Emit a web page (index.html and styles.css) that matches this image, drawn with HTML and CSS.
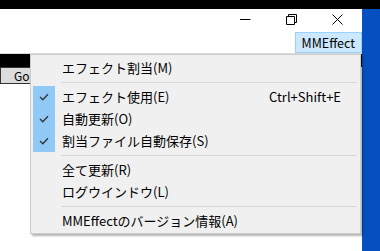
FILE: index.html
```html
<!DOCTYPE html>
<html lang="ja">
<head>
    <meta charset="UTF-8">
    <meta name="viewport" content="width=device-width, initial-scale=1.0">
    <title>MMEffect</title>
    <link rel="stylesheet" href="styles.css">
</head>
<body>
    <div class="topbar"></div>

    <div class="screen">
        <div class="window">
            <div class="titlebar">
                <span class="caption-btn">
                    <svg width="11" height="11" viewBox="0 0 11 11"><path d="M0 5.5H10.5" stroke="#000" fill="none"/></svg>
                </span>
                <span class="caption-btn">
                    <svg width="11" height="11" viewBox="0 0 11 11"><path d="M0.5 2.5H8.5V10.5H0.5Z M2.5 2.5V0.5H10.5V8.5H8.5" stroke="#000" fill="none"/></svg>
                </span>
                <span class="caption-btn">
                    <svg width="11" height="11" viewBox="0 0 11 11"><path d="M0.5 0.5L10.5 10.5M10.5 0.5L0.5 10.5" stroke="#000" fill="none"/></svg>
                </span>
            </div>

            <div class="menubar">
                <span class="menubar-item active">MMEffect</span>
            </div>

            <div class="content">
                <div class="toolstrip"></div>
                <button class="go-btn">Go</button>
            </div>
        </div>
        <div class="desktop"></div>
    </div>

    <!-- dropdown of the MMEffect menu -->
    <div class="popup">
        <div class="item"><span class="check"></span><span class="label">エフェクト割当(M)</span><span class="key"></span></div>
        <div class="sep"></div>
        <div class="item"><span class="check on"><svg width="10" height="8" viewBox="0 0 10 8"><path d="M1 4L3.8 6.8L9 1.2" stroke="#333" stroke-width="1.3" fill="none"/></svg></span><span class="label">エフェクト使用(E)</span><span class="key">Ctrl+Shift+E</span></div>
        <div class="item"><span class="check on"><svg width="10" height="8" viewBox="0 0 10 8"><path d="M1 4L3.8 6.8L9 1.2" stroke="#333" stroke-width="1.3" fill="none"/></svg></span><span class="label">自動更新(O)</span><span class="key"></span></div>
        <div class="item"><span class="check on"><svg width="10" height="8" viewBox="0 0 10 8"><path d="M1 4L3.8 6.8L9 1.2" stroke="#333" stroke-width="1.3" fill="none"/></svg></span><span class="label">割当ファイル自動保存(S)</span><span class="key"></span></div>
        <div class="sep"></div>
        <div class="item"><span class="check"></span><span class="label">全て更新(R)</span><span class="key"></span></div>
        <div class="item"><span class="check"></span><span class="label">ログウインドウ(L)</span><span class="key"></span></div>
        <div class="sep"></div>
        <div class="item"><span class="check"></span><span class="label">MMEffectのバージョン情報(A)</span><span class="key"></span></div>
    </div>
</body>
</html>
```

FILE: styles.css
```css
body {
    margin: 0;
    width: 380px;
    height: 251px;
    overflow: hidden;
    position: relative;
    background: #fff;
    font-family: "Noto Sans CJK JP", "Noto Sans", sans-serif;
    font-size: 13px;
    color: #000;
}

.topbar {
    height: 9px;
    background: #000;
}

.screen {
    display: flex;
    height: 242px;
}

.window {
    flex: 1;
    background: #fff;
}

.desktop {
    width: 18px;
    background: #0550c0;
}

/* caption buttons */
.titlebar {
    height: 23px;
    display: flex;
    justify-content: flex-end;
    padding-right: 2px;
}

.caption-btn {
    width: 46px;
    display: flex;
    justify-content: center;
    align-items: flex-start;
    padding-top: 5px;
    box-sizing: border-box;
}

.menubar {
    height: 21px;
    display: flex;
    justify-content: flex-end;
    border-bottom: 1px solid #dadada;
}

.menubar-item {
    padding: 0 6px;
    font-size: 12.5px;
    line-height: 19px;
    border: 1px solid transparent;
}

.menubar-item.active {
    background: #cce8ff;
    border-color: #99d1ff;
}

.toolstrip {
    height: 13px;
    background: #000;
}

.go-btn {
    display: block;
    width: 44px;
    height: 17px;
    margin: 0;
    padding: 0 0 0 13px;
    text-align: left;
    font: inherit;
    font-size: 12px;
    line-height: 15px;
    background: #dcdcdc;
    border: 1px solid #333;
}

/* popup menu */
.popup {
    position: absolute;
    left: 30px;
    top: 54px;
    width: 331px;
    box-sizing: border-box;
    padding: 2px 2px 1px;
    background: #f0f0f0;
    border: 1px solid #cccccc;
    box-shadow: 2px 2px 2px rgba(0, 0, 0, 0.3);
}

.item {
    display: flex;
    height: 22px;
    line-height: 22px;
}

.check {
    width: 22px;
    display: flex;
    justify-content: center;
    align-items: center;
}

.check.on {
    background: #90c8f6;
}

.label {
    flex: 1;
    padding-left: 7px;
}

.key {
    padding-right: 17px;
}

.sep {
    height: 1px;
    background: #d7d7d7;
    margin: 3px 1px 3px 28px;
}
```
